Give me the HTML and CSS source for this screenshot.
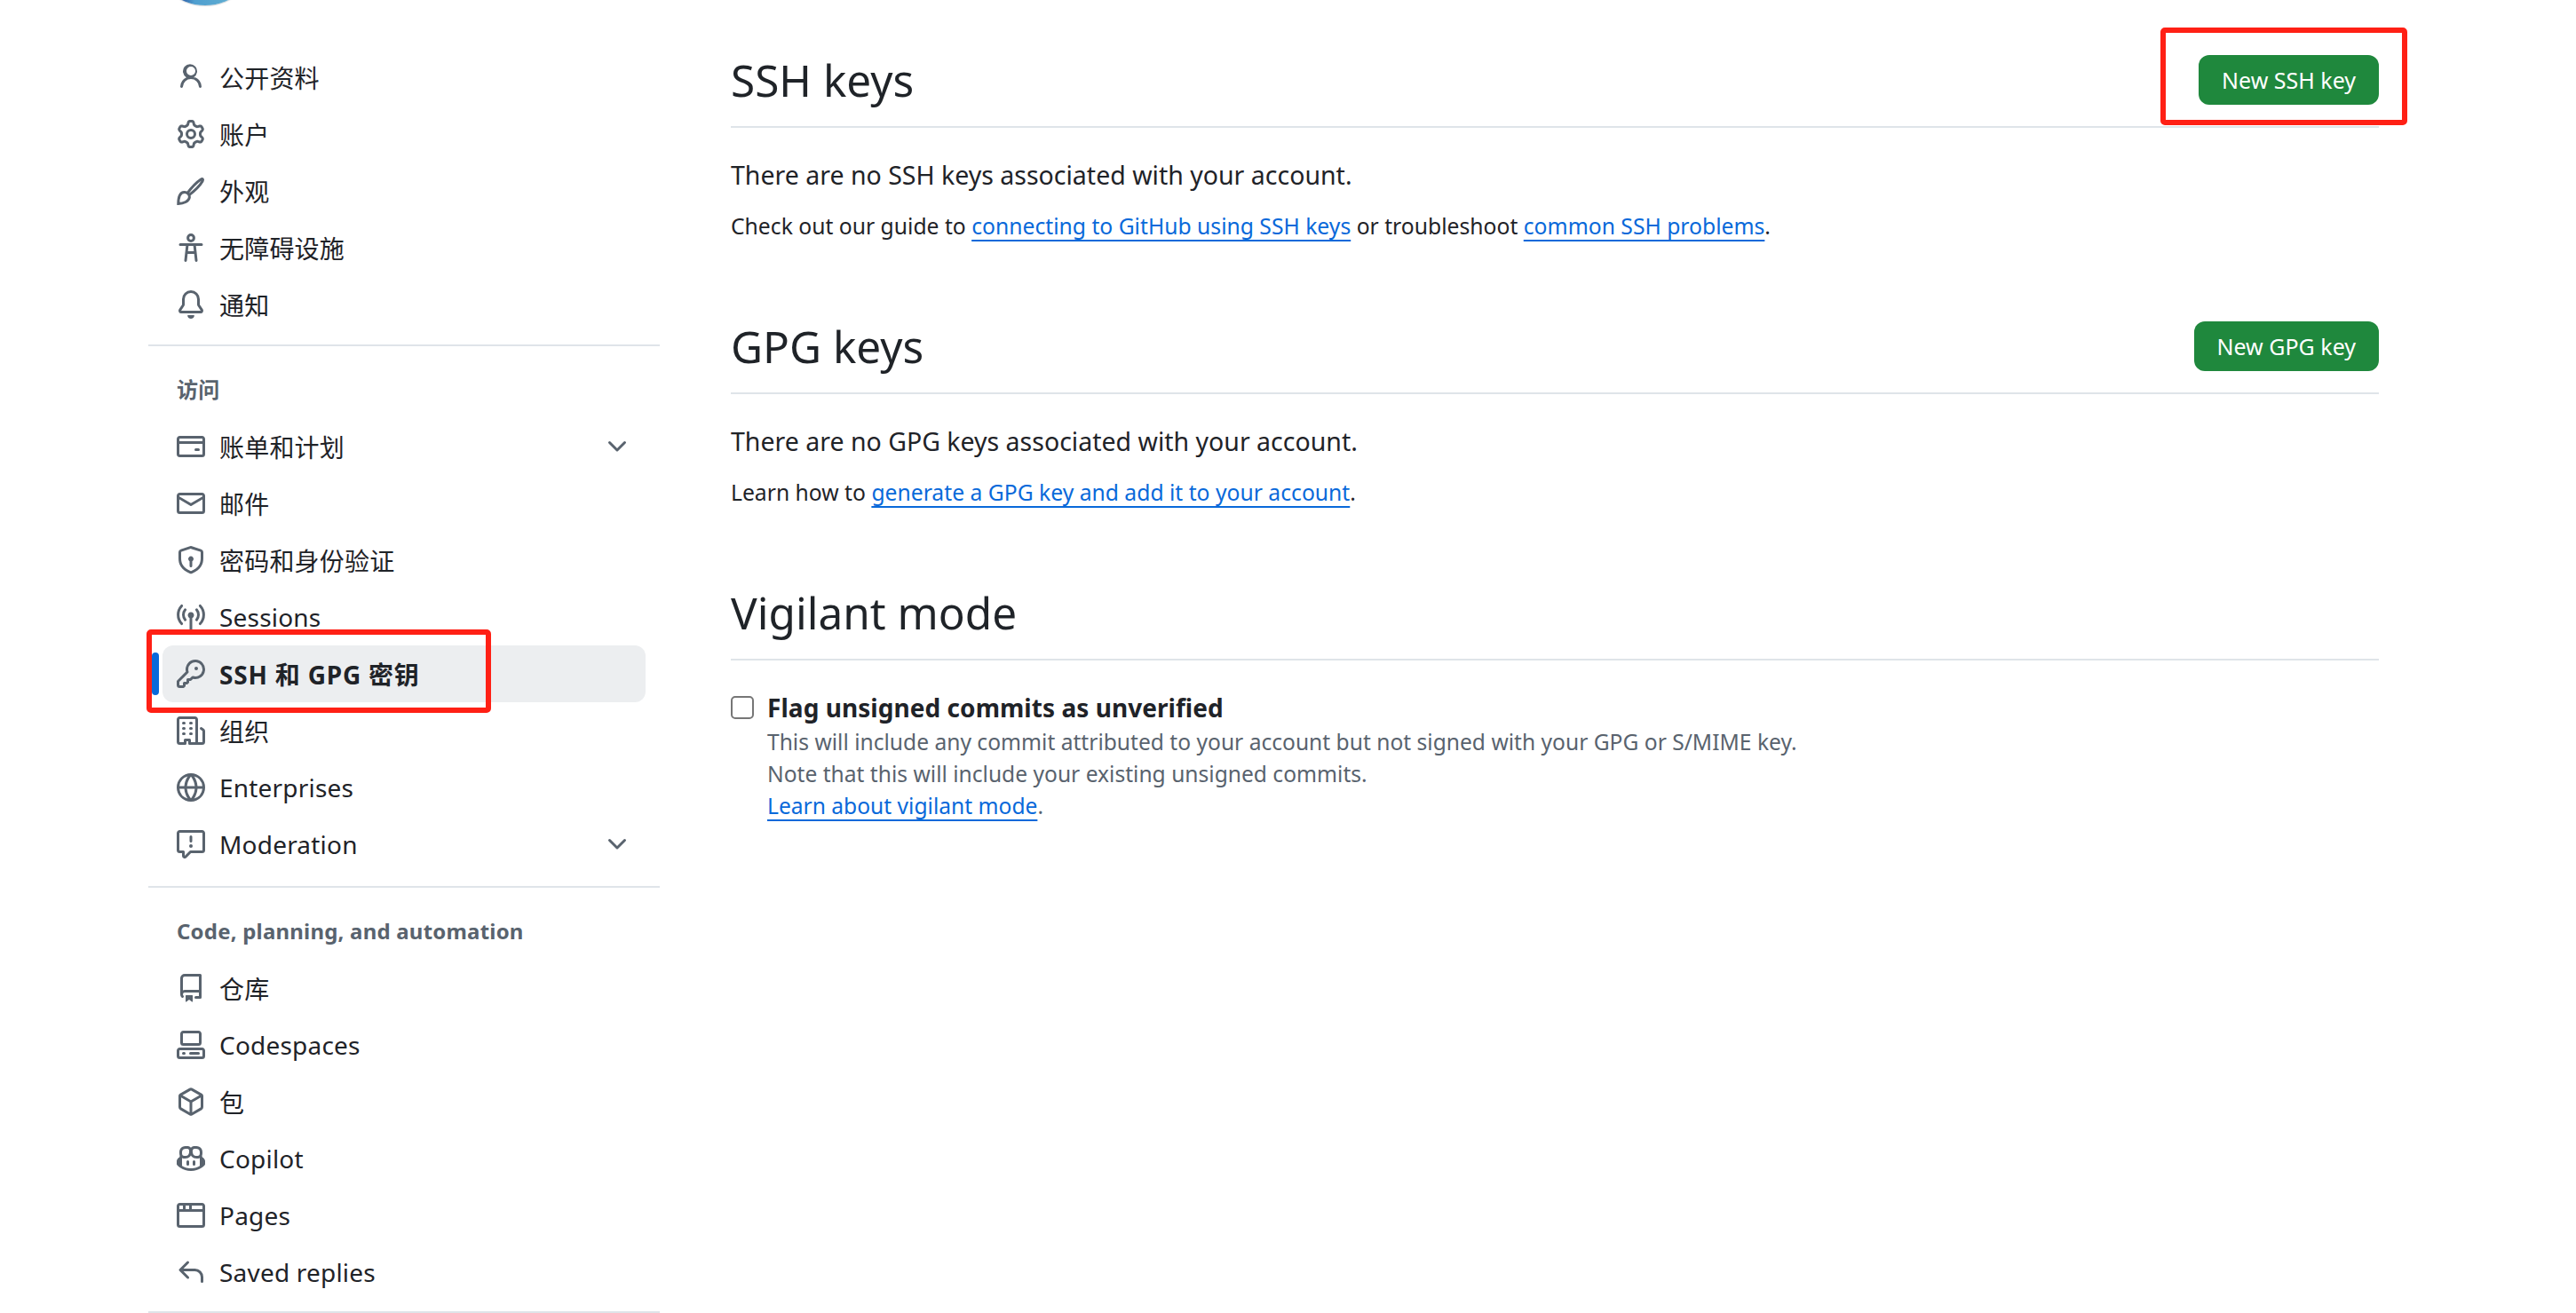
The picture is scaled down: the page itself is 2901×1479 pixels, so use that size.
FILE: index.html
```html
<!DOCTYPE html>
<html lang="zh-CN">
<head>
    <meta charset="UTF-8">
    <title>SSH and GPG keys</title>
    <link rel="stylesheet" href="styles.css">
</head>
<body>
<div class="page">
    <div class="sidebar">
        <div class="avatar-clip"><div class="avatar"></div></div>

        <div class="nav-item"><svg class="icon" viewBox="0 0 16 16"><path d="M10.561 8.073a6.005 6.005 0 0 1 3.432 5.142.75.75 0 1 1-1.498.07 4.5 4.5 0 0 0-8.99 0 .75.75 0 0 1-1.498-.07 6.004 6.004 0 0 1 3.431-5.142 3.999 3.999 0 1 1 4.123 0ZM10.5 4.5a2.5 2.5 0 1 0-5 0 2.5 2.5 0 0 0 5 0Z"/></svg><span>公开资料</span></div>
        <div class="nav-item"><svg class="icon" viewBox="0 0 16 16"><path d="M8 0a8.2 8.2 0 0 1 .701.031C9.444.095 9.99.645 10.16 1.29l.288 1.107c.018.066.079.158.212.224.231.114.454.243.668.386.123.082.233.09.299.071l1.103-.303c.644-.176 1.392.021 1.82.63.27.385.506.792.704 1.218.315.675.111 1.422-.364 1.891l-.814.806c-.049.048-.098.147-.088.294.016.257.016.515 0 .772-.01.147.038.246.088.294l.814.806c.475.469.679 1.216.364 1.891a7.977 7.977 0 0 1-.704 1.217c-.428.61-1.176.807-1.82.63l-1.102-.302c-.067-.019-.177-.011-.3.071a5.909 5.909 0 0 1-.668.386c-.133.066-.194.158-.211.224l-.29 1.106c-.168.646-.715 1.196-1.458 1.26a8.006 8.006 0 0 1-1.402 0c-.743-.064-1.289-.614-1.458-1.26l-.289-1.106c-.018-.066-.079-.158-.212-.224a5.738 5.738 0 0 1-.668-.386c-.123-.082-.233-.09-.299-.071l-1.103.303c-.644.176-1.392-.021-1.82-.63a8.12 8.12 0 0 1-.704-1.218c-.315-.675-.111-1.422.363-1.891l.815-.806c.05-.048.098-.147.088-.294a6.214 6.214 0 0 1 0-.772c.01-.147-.038-.246-.088-.294l-.815-.806C.635 6.045.431 5.298.746 4.623a7.92 7.92 0 0 1 .704-1.217c.428-.61 1.176-.807 1.82-.63l1.102.302c.067.019.177.011.3-.071.214-.143.437-.272.668-.386.133-.066.194-.158.211-.224l.29-1.106C6.009.645 6.556.095 7.299.03 7.53.01 7.764 0 8 0Zm-.571 1.525c-.036.003-.108.036-.137.146l-.289 1.105c-.147.561-.549.967-.998 1.189-.173.086-.34.183-.5.29-.417.278-.97.423-1.529.27l-1.103-.303c-.109-.03-.175.016-.195.045-.22.312-.412.644-.573.99-.014.031-.021.11.059.19l.815.806c.411.406.562.957.53 1.456a4.709 4.709 0 0 0 0 .582c.032.499-.119 1.05-.53 1.456l-.815.806c-.081.08-.073.159-.059.19.162.346.353.677.573.989.02.03.085.076.195.046l1.102-.303c.56-.153 1.113-.008 1.53.27.161.107.328.204.501.29.447.222.85.629.997 1.189l.289 1.105c.029.109.101.143.137.146a6.6 6.6 0 0 0 1.142 0c.036-.003.108-.036.137-.146l.289-1.105c.147-.561.549-.967.998-1.189.173-.086.34-.183.5-.29.417-.278.97-.423 1.529-.27l1.103.303c.109.029.175-.016.195-.045.22-.313.411-.644.573-.99.014-.031.021-.11-.059-.19l-.815-.806c-.411-.406-.562-.957-.53-1.456a4.709 4.709 0 0 0 0-.582c-.032-.499.119-1.05.53-1.456l.815-.806c.081-.08.073-.159.059-.19a6.464 6.464 0 0 0-.573-.989c-.02-.03-.085-.076-.195-.046l-1.102.303c-.56.153-1.113.008-1.53-.27a4.44 4.44 0 0 0-.501-.29c-.447-.222-.85-.629-.997-1.189l-.289-1.105c-.029-.11-.101-.143-.137-.146a6.6 6.6 0 0 0-1.142 0ZM11 8a3 3 0 1 1-6 0 3 3 0 0 1 6 0ZM9.5 8a1.5 1.5 0 1 0-3.001.001A1.5 1.5 0 0 0 9.5 8Z"/></svg><span>账户</span></div>
        <div class="nav-item"><svg class="icon line" viewBox="0 0 16 16"><path d="M6 9.3C8.2 6.3 11.4 3 13.5 1.6c1.1-.7 1.6-.1 1 1C13.200 4.800 10 8 7 10.300"/><path d="M.9 15.200c0-3 .5-6.300 3.300-6.500 1.800-.1 3.100 1.300 3 2.800-.2 2.400-3.300 3.700-6.300 3.700Z"/></svg><span>外观</span></div>
        <div class="nav-item"><svg class="icon line" viewBox="0 0 16 16"><circle cx="8" cy="2.500" r="1.700"/><path d="M2 6.200h12M6 6.200 5 15.200M10 6.200l1 9M5.600 10.800h4.800"/></svg><span>无障碍设施</span></div>
        <div class="nav-item"><svg class="icon" viewBox="0 0 16 16"><path d="M8 16c.9 0 1.7-.6 1.900-1.500.1-.3-.1-.5-.4-.5h-3c-.3 0-.5.2-.4.5.2.900 1 1.500 1.900 1.500ZM3 5a5 5 0 0 1 10 0v2.947c0 .05.015.098.042.139l1.703 2.555A1.519 1.519 0 0 1 13.482 13H2.518a1.516 1.516 0 0 1-1.263-2.360l1.703-2.554A.255.255 0 0 0 3 7.947Zm5-3.500A3.500 3.500 0 0 0 4.500 5v2.947c0 .346-.102.683-.294.970l-1.703 2.556a.017.017 0 0 0-.003.01l.001.006c0 .002.002.004.004.006l.006.004.007.001h10.964l.007-.001.006-.004.004-.006.001-.007a.017.017 0 0 0-.003-.01l-1.703-2.554a1.745 1.745 0 0 1-.294-.970V5A3.500 3.500 0 0 0 8 1.500Z"/></svg><span>通知</span></div>

        <hr class="nav-sep first-sep">
        <div class="nav-title">访问</div>

        <div class="nav-item"><svg class="icon" viewBox="0 0 16 16"><path d="M10.750 9a.750.750 0 0 0 0 1.500h1.500a.750.750 0 0 0 0-1.500h-1.500Z"/><path d="M0 3.750C0 2.784.784 2 1.750 2h12.500c.966 0 1.750.784 1.750 1.750v8.500A1.750 1.750 0 0 1 14.250 14H1.750A1.750 1.750 0 0 1 0 12.250ZM14.500 6.500h-13v5.750c0 .138.112.250.250.250h12.500a.250.250 0 0 0 .250-.250Zm0-2.750a.250.250 0 0 0-.250-.250H1.750a.250.250 0 0 0-.250.250V5h13Z"/></svg><span>账单和计划</span><svg class="icon chevron" viewBox="0 0 16 16"><path d="M12.780 5.220a.749.749 0 0 1 0 1.060l-4.250 4.250a.749.749 0 0 1-1.060 0L3.220 6.280a.749.749 0 1 1 1.060-1.060L8 8.939l3.720-3.719a.749.749 0 0 1 1.060 0Z"/></svg></div>
        <div class="nav-item"><svg class="icon" viewBox="0 0 16 16"><path d="M1.750 2h12.500c.966 0 1.750.784 1.750 1.750v8.500A1.750 1.750 0 0 1 14.250 14H1.750A1.750 1.750 0 0 1 0 12.250v-8.500C0 2.784.784 2 1.750 2ZM1.500 12.251c0 .138.112.250.250.250h12.500a.250.250 0 0 0 .250-.250V5.809L8.380 9.397a.750.750 0 0 1-.760 0L1.500 5.809v6.442Zm13-8.181v-.320a.250.250 0 0 0-.250-.250H1.750a.250.250 0 0 0-.250.250v.320L8 7.880Z"/></svg><span>邮件</span></div>
        <div class="nav-item"><svg class="icon" viewBox="0 0 16 16"><path d="M7.467.133a1.748 1.748 0 0 1 1.066 0l5.250 1.680A1.750 1.750 0 0 1 15 3.480V7c0 1.566-.320 3.182-1.303 4.682-.983 1.498-2.585 2.813-5.032 3.855a1.697 1.697 0 0 1-1.330 0c-2.447-1.042-4.049-2.357-5.032-3.855C1.320 10.182 1 8.566 1 7V3.480a1.750 1.750 0 0 1 1.217-1.667Zm.610 1.429a.250.250 0 0 0-.153 0l-5.250 1.680a.250.250 0 0 0-.174.238V7c0 1.358.275 2.666 1.057 3.860.784 1.194 2.121 2.340 4.366 3.297a.196.196 0 0 0 .154 0c2.245-.956 3.582-2.104 4.366-3.298C13.225 9.666 13.500 8.360 13.500 7V3.480a.251.251 0 0 0-.174-.237l-5.250-1.680ZM8.750 8.582v2.668a.750.750 0 0 1-1.500 0V8.582a1.500 1.500 0 1 1 1.500 0Z"/></svg><span>密码和身份验证</span></div>
        <div class="nav-item"><svg class="icon" viewBox="0 0 16 16"><path d="M8.750 8.582v6.668a.750.750 0 0 1-1.500 0V8.582a1.750 1.750 0 1 1 1.500 0Z"/><path class="arc" d="M13.200 1.700a7.400 7.400 0 0 1 0 10.100M2.800 1.700a7.400 7.400 0 0 0 0 10.100M11.200 3.900a4.400 4.400 0 0 1 0 5.700M4.800 3.900a4.400 4.400 0 0 0 0 5.700"/></svg><span>Sessions</span></div>

        <div class="nav-item active"><svg class="icon" viewBox="0 0 16 16"><path d="M10.500 0a5.499 5.499 0 1 1-1.288 10.848l-.932.932a.749.749 0 0 1-.530.220H7v.750a.749.749 0 0 1-.220.530l-.500.500a.749.749 0 0 1-.530.220H5v.750a.749.749 0 0 1-.220.530l-.500.500a.749.749 0 0 1-.530.220h-2A1.750 1.750 0 0 1 0 14.250v-2c0-.199.079-.389.220-.530l4.932-4.932A5.500 5.500 0 0 1 10.500 0Zm-4 5.500c-.001.431.069.860.205 1.269a.750.750 0 0 1-.181.768L1.500 12.560v1.690c0 .138.112.250.250.250h1.690l.060-.060v-1.190a.750.750 0 0 1 .750-.750h1.190l.060-.060v-1.190a.750.750 0 0 1 .750-.750h1.190l1.023-1.025a.750.750 0 0 1 .768-.180A4 4 0 1 0 6.500 5.500ZM11 6a1 1 0 1 1 0-2 1 1 0 0 1 0 2Z"/></svg><span>SSH 和 GPG 密钥</span></div>

        <div class="nav-item"><svg class="icon" viewBox="0 0 16 16"><path d="M1.750 16A1.750 1.750 0 0 1 0 14.250V1.750C0 .784.784 0 1.750 0h8.500C11.216 0 12 .784 12 1.750v12.500c0 .085-.006.168-.018.250h2.268a.250.250 0 0 0 .250-.250V8.285a.250.250 0 0 0-.111-.208l-1.055-.703a.749.749 0 1 1 .832-1.248l1.055.703c.487.325.779.871.779 1.456v5.965A1.750 1.750 0 0 1 14.250 16h-3.500a.766.766 0 0 1-.197-.026c-.099.017-.200.026-.303.026h-3a.750.750 0 0 1-.750-.750V14h-1v1.250a.750.750 0 0 1-.750.750Zm-.250-1.750c0 .138.112.250.250.250H4v-1.250a.750.750 0 0 1 .750-.750h2.500a.750.750 0 0 1 .750.750v1.250h2.250a.250.250 0 0 0 .250-.250V1.750a.250.250 0 0 0-.250-.250h-8.500a.250.250 0 0 0-.250.250ZM3.750 6h.500a.750.750 0 0 1 0 1.500h-.500a.750.750 0 0 1 0-1.500ZM3 3.750A.750.750 0 0 1 3.750 3h.500a.750.750 0 0 1 0 1.500h-.500A.750.750 0 0 1 3 3.750Zm4 3A.750.750 0 0 1 7.750 6h.500a.750.750 0 0 1 0 1.500h-.500A.750.750 0 0 1 7 6.750ZM7.750 3h.500a.750.750 0 0 1 0 1.500h-.500a.750.750 0 0 1 0-1.500ZM3 9.750A.750.750 0 0 1 3.750 9h.500a.750.750 0 0 1 0 1.500h-.500A.750.750 0 0 1 3 9.750ZM7.750 9h.500a.750.750 0 0 1 0 1.500h-.500a.750.750 0 0 1 0-1.500Z"/></svg><span>组织</span></div>
        <div class="nav-item"><svg class="icon" viewBox="0 0 16 16"><path d="M8 0a8 8 0 1 1 0 16A8 8 0 0 1 8 0ZM5.780 8.750a9.640 9.640 0 0 0 1.363 4.177c.255.426.542.832.857 1.215.245-.296.551-.705.857-1.215A9.640 9.640 0 0 0 10.220 8.750Zm4.440-1.500a9.640 9.640 0 0 0-1.363-4.177c-.307-.510-.612-.919-.857-1.215a9.927 9.927 0 0 0-.857 1.215A9.640 9.640 0 0 0 5.780 7.250Zm-5.944 1.500H1.543a6.507 6.507 0 0 0 4.666 5.500c-.123-.181-.240-.365-.352-.552-.715-1.192-1.437-2.874-1.581-4.948Zm-2.733-1.500h2.733c.144-2.074.866-3.756 1.580-4.948.120-.197.237-.381.353-.552a6.507 6.507 0 0 0-4.666 5.500Zm10.181 1.500c-.144 2.074-.866 3.756-1.580 4.948-.120.197-.237.381-.353.552a6.507 6.507 0 0 0 4.666-5.500Zm2.733-1.500a6.507 6.507 0 0 0-4.666-5.500c.123.181.240.365.353.552.714 1.192 1.436 2.874 1.580 4.948Z"/></svg><span>Enterprises</span></div>
        <div class="nav-item"><svg class="icon" viewBox="0 0 16 16"><path d="M0 1.750C0 .784.784 0 1.750 0h12.500C15.216 0 16 .784 16 1.750v9.500A1.750 1.750 0 0 1 14.250 13H8.060l-2.573 2.573A1.458 1.458 0 0 1 3 14.543V13H1.750A1.750 1.750 0 0 1 0 11.250Zm1.750-.250a.250.250 0 0 0-.250.250v9.500c0 .138.112.250.250.250h2a.750.750 0 0 1 .750.750v2.190l2.720-2.720a.749.749 0 0 1 .530-.220h6.500a.250.250 0 0 0 .250-.250v-9.500a.250.250 0 0 0-.250-.250Zm7 2.250v2.500a.750.750 0 0 1-1.500 0v-2.500a.750.750 0 0 1 1.500 0ZM9 9a1 1 0 1 1-2 0 1 1 0 0 1 2 0Z"/></svg><span>Moderation</span><svg class="icon chevron" viewBox="0 0 16 16"><path d="M12.780 5.220a.749.749 0 0 1 0 1.060l-4.250 4.250a.749.749 0 0 1-1.060 0L3.220 6.280a.749.749 0 1 1 1.060-1.060L8 8.939l3.720-3.719a.749.749 0 0 1 1.060 0Z"/></svg></div>

        <hr class="nav-sep">
        <div class="nav-title">Code, planning, and automation</div>

        <div class="nav-item"><svg class="icon" viewBox="0 0 16 16"><path d="M2 2.500A2.500 2.500 0 0 1 4.500 0h8.750a.750.750 0 0 1 .750.750v12.500a.750.750 0 0 1-.750.750h-2.500a.750.750 0 0 1 0-1.500h1.750v-2h-8a1 1 0 0 0-.714 1.700.750.750 0 1 1-1.072 1.050A2.495 2.495 0 0 1 2 11.500Zm10.500-1h-8a1 1 0 0 0-1 1v6.708A2.486 2.486 0 0 1 4.500 9h8ZM5 12.250a.250.250 0 0 1 .250-.250h3.500a.250.250 0 0 1 .250.250v3.250a.250.250 0 0 1-.400.200l-1.450-1.087a.249.249 0 0 0-.300 0L5.400 15.700a.250.250 0 0 1-.400-.200Z"/></svg><span>仓库</span></div>
        <div class="nav-item"><svg class="icon" viewBox="0 0 16 16"><path d="M0 11.250c0-.966.784-1.750 1.750-1.750h12.500c.966 0 1.750.784 1.750 1.750v3A1.750 1.750 0 0 1 14.250 16H1.750A1.750 1.750 0 0 1 0 14.250Zm2-9.500C2 .784 2.784 0 3.750 0h8.500C13.216 0 14 .784 14 1.750v5a1.750 1.750 0 0 1-1.750 1.750h-8.500A1.750 1.750 0 0 1 2 6.750Zm1.750-.250a.250.250 0 0 0-.250.250v5c0 .138.112.250.250.250h8.500a.250.250 0 0 0 .250-.250v-5a.250.250 0 0 0-.250-.250Zm-2 9.500a.250.250 0 0 0-.250.250v3c0 .138.112.250.250.250h12.500a.250.250 0 0 0 .250-.250v-3a.250.250 0 0 0-.250-.250Z"/><path d="M7 12.750a.750.750 0 0 1 .750-.750h4.500a.750.750 0 0 1 0 1.500h-4.500a.750.750 0 0 1-.750-.750Zm-4 0a.750.750 0 0 1 .750-.750h.500a.750.750 0 0 1 0 1.500h-.500a.750.750 0 0 1-.750-.750Z"/></svg><span>Codespaces</span></div>
        <div class="nav-item"><svg class="icon" viewBox="0 0 16 16"><path d="m8.878.392 5.250 3.045c.540.314.872.890.872 1.514v6.098a1.750 1.750 0 0 1-.872 1.514l-5.250 3.045a1.750 1.750 0 0 1-1.756 0l-5.250-3.045A1.750 1.750 0 0 1 1 11.049V4.951c0-.624.332-1.201.872-1.514L7.122.392a1.750 1.750 0 0 1 1.756 0ZM7.875 1.690l-4.630 2.685L8 7.133l4.755-2.758-4.630-2.685a.248.248 0 0 0-.250 0ZM2.500 5.677v5.372c0 .090.047.171.125.216l4.625 2.683V8.432Zm6.250 8.271 4.625-2.683a.250.250 0 0 0 .125-.216V5.677L8.750 8.432Z"/></svg><span>包</span></div>
        <div class="nav-item"><svg class="icon" viewBox="0 0 16 16"><path d="M7.998 15.035c-4.562 0-7.873-2.914-7.998-3.749V9.338c.085-.628.677-1.686 1.588-2.065.013-.070.024-.143.036-.218.029-.183.060-.384.126-.612-.201-.508-.254-1.084-.254-1.656 0-.870.128-1.769.693-2.484.579-.733 1.494-1.124 2.724-1.261 1.206-.134 2.262.034 2.944.765.050.053.096.108.139.165.044-.057.094-.112.143-.165.682-.731 1.738-.899 2.944-.765 1.230.137 2.145.528 2.724 1.261.566.715.693 1.614.693 2.484 0 .572-.053 1.148-.254 1.656.066.228.098.429.126.612.012.076.024.148.037.218.924.385 1.522 1.471 1.591 2.095v1.872c0 .766-3.351 3.795-8.002 3.795Zm0-1.485c2.280 0 4.584-1.110 5.002-1.433V7.862l-.023-.116c-.490.210-1.075.291-1.727.291-1.146 0-2.059-.327-2.710-.991A3.222 3.222 0 0 1 8 6.303a3.240 3.240 0 0 1-.544.743c-.650.664-1.563.991-2.710.991-.652 0-1.236-.081-1.727-.291l-.023.116v4.255c.419.323 2.722 1.433 5.002 1.433ZM6.762 2.830c-.193-.206-.637-.413-1.682-.297-1.019.113-1.479.404-1.713.700-.247.312-.369.789-.369 1.554 0 .793.129 1.171.308 1.371.162.181.519.379 1.442.379.853 0 1.339-.235 1.638-.540.315-.322.527-.827.617-1.553.117-.935-.037-1.395-.241-1.614Zm4.155-.297c-1.044-.116-1.488.091-1.681.297-.204.219-.359.679-.242 1.614.091.726.303 1.231.618 1.553.299.305.784.540 1.638.540.922 0 1.280-.198 1.442-.379.179-.200.308-.578.308-1.371 0-.765-.123-1.242-.370-1.554-.233-.296-.693-.587-1.713-.700Z"/><path d="M6.250 9.037a.750.750 0 0 1 .750.750v1.501a.750.750 0 0 1-1.500 0V9.787a.750.750 0 0 1 .750-.750Zm4.250.750v1.501a.750.750 0 0 1-1.500 0V9.787a.750.750 0 0 1 1.500 0Z"/></svg><span>Copilot</span></div>
        <div class="nav-item"><svg class="icon" viewBox="0 0 16 16"><path d="M0 2.750C0 1.784.784 1 1.750 1h12.500c.966 0 1.750.784 1.750 1.750v10.500A1.750 1.750 0 0 1 14.250 15H1.750A1.750 1.750 0 0 1 0 13.250ZM14.500 6h-13v7.250c0 .138.112.250.250.250h12.500a.250.250 0 0 0 .250-.250Zm-6-3.500v2h6V2.750a.250.250 0 0 0-.250-.250ZM5 2.500v2h2v-2Zm-3.250 0a.250.250 0 0 0-.250.250V4.500h2v-2Z"/></svg><span>Pages</span></div>
        <div class="nav-item"><svg class="icon" viewBox="0 0 16 16"><path d="M6.780 1.970a.750.750 0 0 1 0 1.060L3.810 6h6.440A4.750 4.750 0 0 1 15 10.750v2.500a.750.750 0 0 1-1.500 0v-2.500a3.250 3.250 0 0 0-3.250-3.250H3.810l2.970 2.970a.749.749 0 0 1-.326 1.275.749.749 0 0 1-.734-.215L1.470 7.280a.750.750 0 0 1 0-1.060l4.250-4.250a.750.750 0 0 1 1.060 0Z"/></svg><span>Saved replies</span></div>
        <hr class="nav-sep last-sep">
    </div>

    <div class="main">
        <div class="subhead">
            <h2>SSH keys</h2>
            <button class="btn">New SSH key</button>
        </div>
        <p class="blank">There are no SSH keys associated with your account.</p>
        <p class="note">Check out our guide to <a href="#">connecting to GitHub using SSH keys</a> or troubleshoot <a href="#">common SSH problems</a>.</p>

        <div class="subhead">
            <h2>GPG keys</h2>
            <button class="btn">New GPG key</button>
        </div>
        <p class="blank">There are no GPG keys associated with your account.</p>
        <p class="note">Learn how to <a href="#">generate a GPG key and add it to your account</a>.</p>

        <div class="subhead">
            <h2>Vigilant mode</h2>
        </div>
        <div class="vigilant">
            <input type="checkbox" class="check" id="vigilant">
            <div>
                <label for="vigilant">Flag unsigned commits as unverified</label>
                <div class="hint first-hint">This will include any commit attributed to your account but not signed with your GPG or S/MIME key.</div>
                <div class="hint">Note that this will include your existing unsigned commits.</div>
                <div class="hint"><a href="#">Learn about vigilant mode</a>.</div>
            </div>
        </div>
    </div>

    <!-- red boxes drawn on top of the screenshot -->
    <div class="mark mark-nav"></div>
    <div class="mark mark-btn"></div>
</div>
</body>
</html>
```

FILE: styles.css
```css
html, body {
    margin: 0;
    height: 100%;
    overflow: hidden;
    background: #fff;
}
body {
    font-family: "Noto Sans", "Noto Sans CJK SC", sans-serif;
    color: #1f2328;
}
.page {
    position: relative;
    display: flex;
    padding-left: 167px;
    height: 1479px;
}

/* sidebar */
.sidebar {
    width: 576px;
    flex: none;
}
.avatar-clip {
    height: 55px;
    display: flex;
    justify-content: center;
    overflow: hidden;
}
.avatar {
    width: 120px;
    height: 120px;
    flex: none;
    margin: -114px 0 0 -448px;
    border-radius: 50%;
    background: linear-gradient(90deg, #1c3f92 22%, #4f9fd0 40%, #6cb8d2);
    box-shadow: 0 1px 1px #cfd4d8;
}
.nav-item {
    display: flex;
    align-items: center;
    gap: 16px;
    height: 64px;
    margin: 0 16px;
    padding: 0 16px;
    font-size: 28px;
    letter-spacing: .2px;
    position: relative;
    box-sizing: border-box;
}
.nav-item.active {
    background: #eceef0;
    border-radius: 12px;
    font-weight: 700;
    letter-spacing: .8px;
}
.nav-item.active::before {
    content: "";
    position: absolute;
    left: -12px;
    top: 8px;
    width: 8px;
    height: 48px;
    border-radius: 4px;
    background: #0969da;
}
.icon {
    width: 32px;
    height: 32px;
    flex: none;
    fill: #59636e;
}
.icon.line path, .icon.line circle, .icon .arc {
    fill: none;
    stroke: #59636e;
    stroke-width: 1.5;
    stroke-linecap: round;
}
.chevron {
    margin-left: auto;
}
.nav-sep {
    height: 2px;
    margin: 15px 0 0;
    border: 0;
    background: #dfe4e9;
}
.first-sep {
    margin-top: 13px;
}
.last-sep {
    margin-top: 12px;
}
.nav-title {
    height: 81px;
    box-sizing: border-box;
    padding: 32px 0 0 32px;
    font-size: 24px;
    line-height: 34px;
    font-weight: 700;
    letter-spacing: .2px;
    color: #59636e;
}

/* main column */
.main {
    width: 1856px;
    margin-left: 80px;
    flex: none;
}
.subhead {
    display: flex;
    justify-content: space-between;
    align-items: flex-start;
    height: 144px;
    box-sizing: border-box;
    padding-top: 62px;
    border-bottom: 2px solid #dfe4e9;
}
h2 {
    margin: -2px 0 0;
    font-size: 49.500px;
    line-height: 60px;
    font-weight: 400;
}
.btn {
    height: 56px;
    padding: 0 26px;
    border: 0;
    border-radius: 12px;
    background: #1f883d;
    color: #fff;
    font-family: inherit;
    font-size: 25px;
}
.blank {
    margin: 32px 0 0;
    font-size: 28.500px;
    line-height: 42px;
}
.note {
    margin: 19px 0 0;
    height: 63px;
    font-size: 24.700px;
    line-height: 36px;
}
a {
    color: #0969da;
    text-decoration: underline;
    text-decoration-thickness: 2px;
    text-underline-offset: 6px;
}
.vigilant {
    display: flex;
    gap: 15px;
    padding-top: 33px;
}
.check {
    appearance: none;
    box-sizing: border-box;
    width: 26px;
    height: 26px;
    margin: 7px 0 0;
    flex: none;
    background: #fff;
    border: 2px solid #767676;
    border-radius: 5px;
}
label {
    display: block;
    font-size: 28px;
    line-height: 40px;
    font-weight: 700;
    letter-spacing: .05px;
}
.hint {
    font-size: 24.600px;
    line-height: 36px;
    color: #59636e;
}
.first-hint {
    margin-top: 1px;
}

/* annotation */
.mark {
    position: absolute;
    box-sizing: border-box;
    border: 6px solid #ff2015;
    border-radius: 5px;
}
.mark-nav {
    left: 165px;
    top: 709px;
    width: 388px;
    height: 94px;
}
.mark-btn {
    left: 2433px;
    top: 31px;
    width: 278px;
    height: 110px;
}
```
